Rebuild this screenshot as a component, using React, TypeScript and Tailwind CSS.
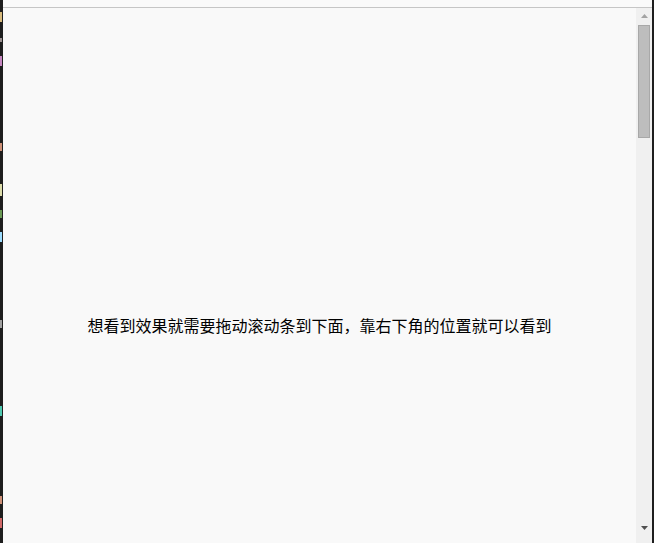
const codeBits = [
  { top: 12, h: 10, color: 'bg-[#d7ba7d]' },
  { top: 38, h: 4, color: 'bg-[#9a8f8f]' },
  { top: 56, h: 10, color: 'bg-[#c586c0]' },
  { top: 143, h: 8, color: 'bg-[#ce9178]' },
  { top: 184, h: 12, color: 'bg-[#dcdcaa]' },
  { top: 210, h: 8, color: 'bg-[#6a9955]' },
  { top: 232, h: 10, color: 'bg-[#9cdcfe]' },
  { top: 320, h: 8, color: 'bg-[#a0a0a0]' },
  { top: 406, h: 10, color: 'bg-[#4ec9b0]' },
  { top: 496, h: 8, color: 'bg-[#ce9178]' },
  { top: 518, h: 10, color: 'bg-[#d16969]' },
];

function EditorEdge() {
  return (
    <div className="relative w-[3px] shrink-0 bg-[#1e1e1e]">
      {codeBits.map((b) => (
        <span
          key={b.top}
          className={`absolute left-0 w-[2px] ${b.color}`}
          style={{ top: b.top, height: b.h }}
        />
      ))}
    </div>
  );
}

function Scrollbar() {
  return (
    <div className="flex w-[16px] shrink-0 flex-col items-center bg-[#f0f0f0]">
      <div className="mt-[3px] flex h-[10px] items-center justify-center">
        <svg width="7" height="4" viewBox="0 0 7 4">
          <path d="M3.5 0 L7 4 L0 4 Z" fill="#a3a3a3" />
        </svg>
      </div>
      <div className="mt-[4px] h-[113px] w-[12px] border border-[#a8a8a8] bg-[#bdbdbd]" />
      <div className="flex-1" />
      <div className="mb-[10px] flex h-[10px] items-center justify-center">
        <svg width="7" height="4" viewBox="0 0 7 4">
          <path d="M0 0 L7 0 L3.5 4 Z" fill="#505050" />
        </svg>
      </div>
    </div>
  );
}

export default function App() {
  return (
    <div className="flex h-[543px] w-[654px] overflow-hidden bg-[#f9f9f9]">
      <EditorEdge />
      <div className="flex min-w-0 flex-1 flex-col">
        <div className="h-[8px] shrink-0 border-b border-[#c6c6c6] bg-[#fafafa]" />
        <div className="flex min-h-0 flex-1">
          <div className="flex-1 pt-[305px] text-center">
            <p
              className="text-[16px] leading-[24px] text-black"
              style={{ fontFamily: '"Noto Sans CJK SC", "Noto Sans", sans-serif' }}
            >
              想看到效果就需要拖动滚动条到下面，靠右下角的位置就可以看到
            </p>
          </div>
          <Scrollbar />
        </div>
      </div>
      <div className="w-[2px] shrink-0 bg-[#1e1e1e]" />
    </div>
  );
}
